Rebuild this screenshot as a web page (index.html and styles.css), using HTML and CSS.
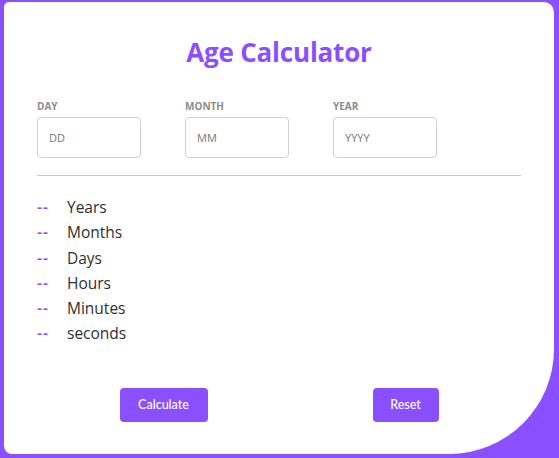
FILE: index.html
```html
<!DOCTYPE html>
<html>
<head>
<meta charset="utf-8">
<link rel="stylesheet" href="styles.css">
</head>
<body>
<div class="card">
  <h1 class="title">Age Calculator</h1>
  <div class="fields">
    <div class="field">
      <label class="label">Day</label>
      <input class="input" type="text" placeholder="DD">
    </div>
    <div class="field">
      <label class="label">Month</label>
      <input class="input" type="text" placeholder="MM">
    </div>
    <div class="field">
      <label class="label">Year</label>
      <input class="input" type="text" placeholder="YYYY">
    </div>
  </div>
  <hr class="divider">
  <ul class="results">
    <li class="row"><span class="val">--</span><span class="unit">Years</span></li>
    <li class="row"><span class="val">--</span><span class="unit">Months</span></li>
    <li class="row"><span class="val">--</span><span class="unit">Days</span></li>
    <li class="row"><span class="val">--</span><span class="unit">Hours</span></li>
    <li class="row"><span class="val">--</span><span class="unit">Minutes</span></li>
    <li class="row"><span class="val">--</span><span class="unit">seconds</span></li>
  </ul>
  <div class="actions">
    <button class="btn btn-calc">Calculate</button>
    <button class="btn btn-reset">Reset</button>
  </div>
</div>
</body>
</html>
```
FILE: styles.css
```css
html, body {
  margin: 0;
  padding: 0;
}
body {
  background: #8a4fff;
  width: 559px;
  height: 458px;
  overflow: hidden;
  font-family: "Open Sans", "Noto Sans", sans-serif;
}
.card {
  box-sizing: border-box;
  margin: 2px 0 0 4px;
  width: 550px;
  height: 452px;
  background: #fff;
  border-radius: 5px 10px 105px 8px;
  padding: 0 33px;
}
.title {
  margin: 0;
  padding-top: 30px;
  text-align: center;
  color: #8a4fff;
  font-size: 26px;
  font-weight: 700;
  line-height: 40px;
  letter-spacing: -0.2px;
}
.fields {
  display: flex;
  gap: 44px;
  margin-top: 27px;
}
.field {
  display: flex;
  flex-direction: column;
  width: 104px;
}
.label {
  text-transform: uppercase;
  font-size: 10px;
  font-weight: 700;
  color: #8c8c8c;
  line-height: 14px;
  margin-bottom: 4px;
}
.input {
  box-sizing: border-box;
  width: 104px;
  height: 41px;
  border: 1px solid #cfcfd4;
  border-radius: 4px;
  padding: 0 11px;
  font-family: "Open Sans", sans-serif;
  font-size: 11px;
  color: #333;
  outline: none;
}
.input::placeholder {
  color: #777;
}
.divider {
  margin: 17px 0 0 0;
  border: 0;
  border-top: 1px solid #c8c8c8;
  width: 484px;
}
.results {
  list-style: none;
  margin: 19px 0 0 0;
  padding: 0;
}
.row {
  display: flex;
  align-items: baseline;
  height: 25.3px;
  line-height: 25px;
  font-size: 15.5px;
  color: #2f2f2f;
}
.val {
  color: #8a4fff;
  font-weight: 600;
  width: 30px;
  letter-spacing: 1px;
}
.actions {
  display: flex;
  justify-content: space-around;
  width: 484px;
  margin-top: 41px;
}
.btn {
  height: 34px;
  border: 0;
  border-radius: 4px;
  background: #8a4fff;
  color: #fff;
  font-family: "Lato", "Open Sans", sans-serif;
  font-size: 12.5px;
  font-weight: 500;
  padding: 0;
}
.btn-calc {
  width: 88px;
}
.btn-reset {
  width: 66px;
}
```
